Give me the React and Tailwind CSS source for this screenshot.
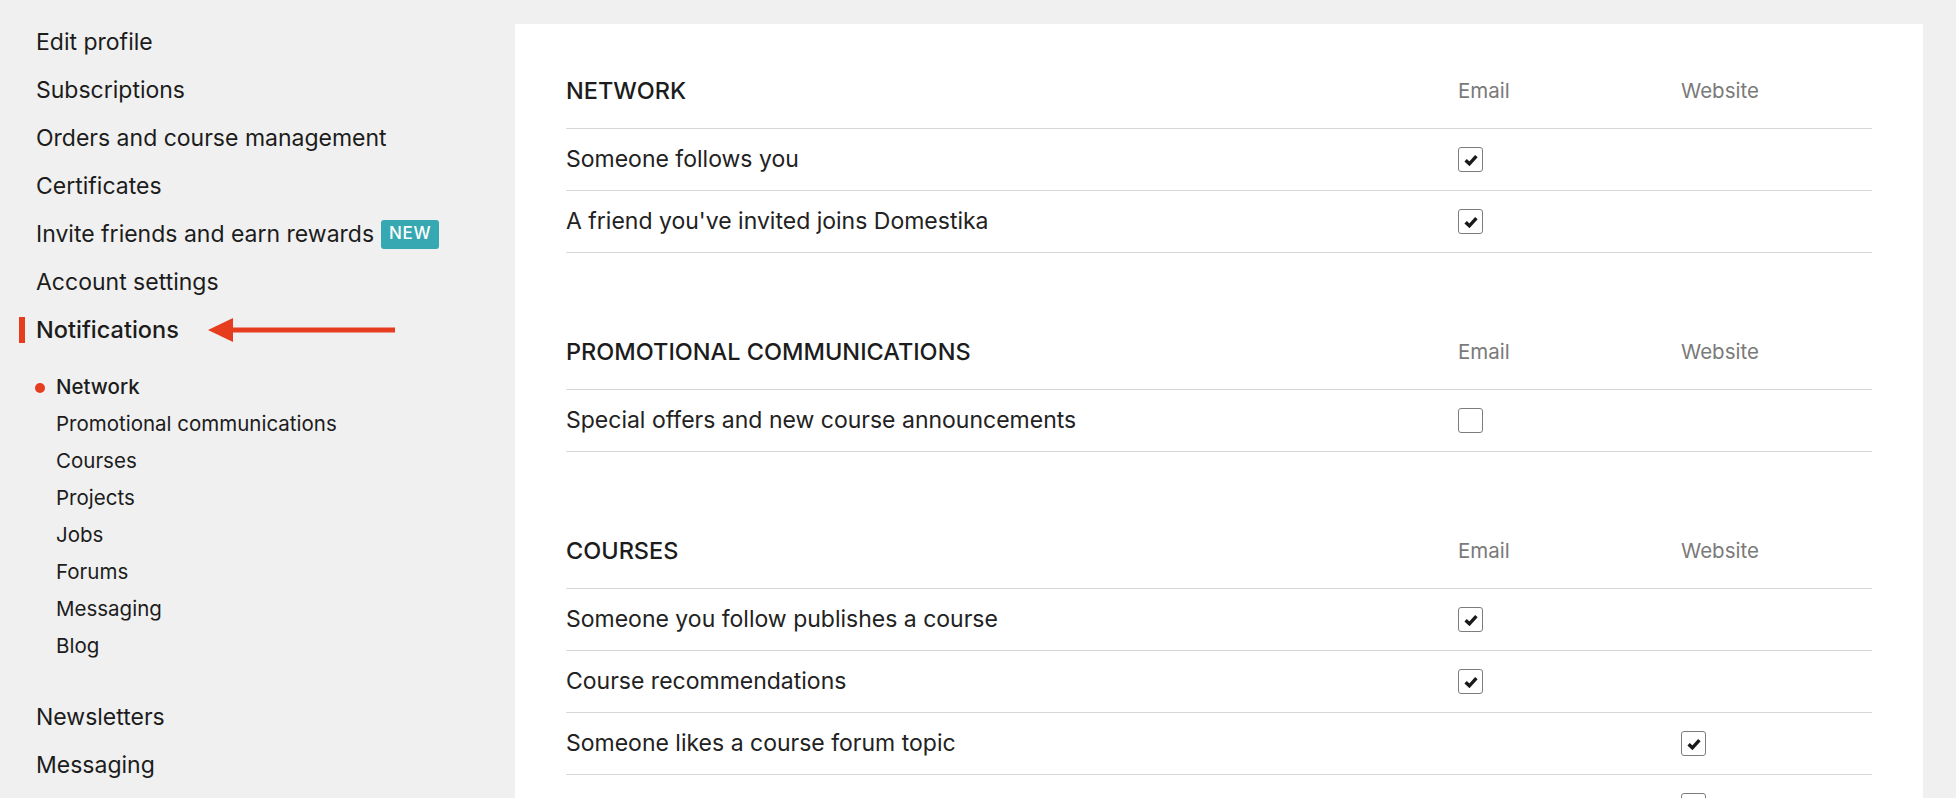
import React from "react";

const mainLinks = [
  "Edit profile",
  "Subscriptions",
  "Orders and course management",
  "Certificates",
];

const subLinks = [
  "Network",
  "Promotional communications",
  "Courses",
  "Projects",
  "Jobs",
  "Forums",
  "Messaging",
  "Blog",
];

const sections = [
  {
    title: "NETWORK",
    rows: [
      { label: "Someone follows you", email: true },
      { label: "A friend you've invited joins Domestika", email: true },
    ],
  },
  {
    title: "PROMOTIONAL COMMUNICATIONS",
    rows: [{ label: "Special offers and new course announcements", email: false }],
  },
  {
    title: "COURSES",
    rows: [
      { label: "Someone you follow publishes a course", email: true },
      { label: "Course recommendations", email: true },
      { label: "Someone likes a course forum topic", website: true },
      // next row is cut off by the bottom of the window, only its box peeks in
      { label: "", website: true },
    ],
  },
];

function Checkbox({ checked }) {
  return (
    <span className="flex h-[25px] w-[25px] items-center justify-center rounded-[3px] border border-[#7c7c7c] bg-white">
      {checked && (
        <svg width="14" height="12" viewBox="0 0 14 12">
          <polyline
            points="1.6,6.2 5.4,9.8 12.4,2.2"
            fill="none"
            stroke="#1a1a1a"
            strokeWidth="3.4"
            strokeLinejoin="miter"
          />
        </svg>
      )}
    </span>
  );
}

function Section({ section, first }) {
  return (
    <div className={first ? "" : "mt-[84px]"}>
      {/* header */}
      <div className="flex items-center border-b border-[#d8d8d8] pb-[22px] leading-[30px]">
        <div className="flex-1 text-[23.5px] font-medium text-[#1c1c1c]">{section.title}</div>
        <div className="w-[223px] text-[20.5px] text-[#7a7a7a]">Email</div>
        <div className="w-[191px] text-[20.5px] text-[#7a7a7a]">Website</div>
      </div>
      {section.rows.map((row, i) => (
        <div
          key={i}
          className="flex h-[62px] items-center border-b border-[#d8d8d8] text-[23px] text-[#222]"
        >
          <div className="flex-1">{row.label}</div>
          <div className="w-[223px]">
            {row.email !== undefined && <Checkbox checked={row.email} />}
          </div>
          <div className="w-[191px]">
            {row.website !== undefined && <Checkbox checked={row.website} />}
          </div>
        </div>
      ))}
    </div>
  );
}

export default function App() {
  return (
    <div className="flex min-h-screen bg-[#f0f0f0] font-['Inter',sans-serif] text-[#1c1c1c]">
      {/* SIDEBAR */}
      <aside className="w-[515px] shrink-0 pl-[36px] pt-[18px]">
        {mainLinks.map((l) => (
          <div key={l} className="flex h-[48px] items-center text-[23px]">
            {l}
          </div>
        ))}
        <div className="flex h-[48px] items-center text-[23px]">
          Invite friends and earn rewards
          <span className="ml-[7px] flex h-[29px] items-center rounded-[3px] bg-[#36a8b1] px-[8px] text-[17px] font-medium tracking-[0.6px] text-white">
            NEW
          </span>
        </div>
        <div className="flex h-[48px] items-center text-[23px]">Account settings</div>
        <div className="flex h-[48px] items-center text-[23.5px] font-medium">
          <span className="-ml-[17px] mr-[11px] h-[26px] w-[6px] bg-[#e63d1f]" />
          Notifications
          <svg className="ml-[29px]" width="187" height="26" viewBox="0 0 187 26">
            <polygon points="0,13 25,1 25,25" fill="#e63d1f" />
            <rect x="24" y="10.5" width="163" height="5" fill="#e63d1f" />
          </svg>
        </div>

        {/* notification sub-menu */}
        <div className="mt-[15px] pl-[20px]">
          {subLinks.map((s, i) => (
            <div
              key={s}
              className={`flex h-[37px] items-center text-[20.5px] ${i === 0 ? "font-medium" : ""}`}
            >
              {i === 0 && (
                <span className="-ml-[21px] mr-[11px] h-[10px] w-[10px] rounded-full bg-[#e63d1f]" />
              )}
              {s}
            </div>
          ))}
        </div>

        <div className="mt-[28px]">
          <div className="flex h-[48px] items-center text-[23px]">Newsletters</div>
          <div className="flex h-[48px] items-center text-[23px]">Messaging</div>
        </div>
      </aside>

      {/* MAIN PANEL */}
      <main className="mr-[33px] mt-[24px] flex-1 bg-white px-[51px] pt-[52px]">
        {sections.map((s, i) => (
          <Section key={s.title} section={s} first={i === 0} />
        ))}
      </main>
    </div>
  );
}
